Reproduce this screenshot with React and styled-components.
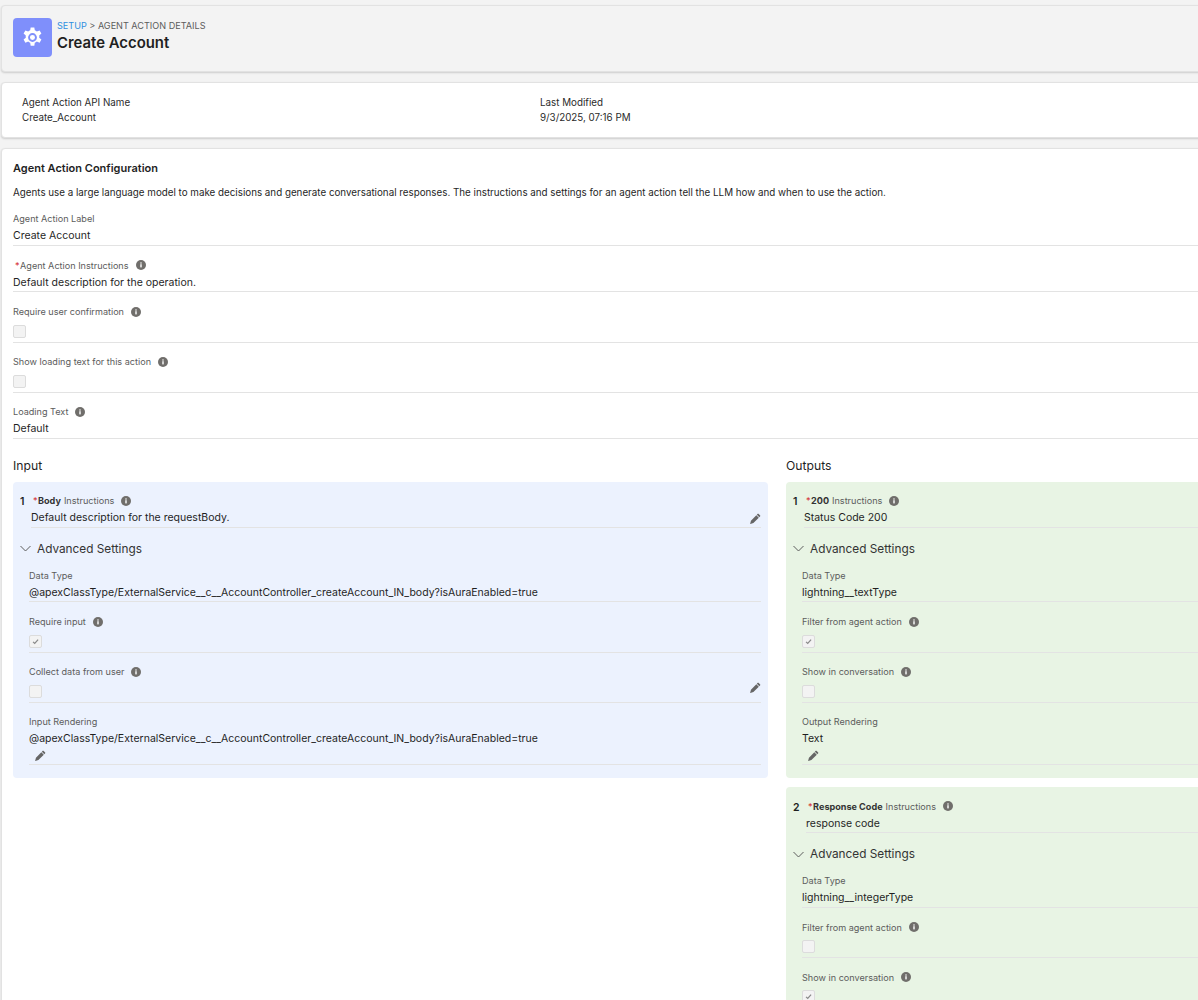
import React from 'react';
import styled, { createGlobalStyle } from 'styled-components';

const GlobalStyle = createGlobalStyle`
  html, body {
    margin: 0;
    height: 1000px;
    overflow: hidden;
    background: #f3f3f3;
  }
  body {
    font-family: "Inter", "Liberation Sans", Arial, sans-serif;
    color: #1f1f1f;
  }
`;

const Gear = () => (
  <svg width="23" height="23" viewBox="0 0 24 24" fill="#fff">
    <path
      fillRule="evenodd"
      d="M13.9 1.5h-3.8l-.5 3a8 8 0 0 0-2.1 1.2L4.6 4.6 2.7 7.9l2.3 1.9a8 8 0 0 0 0 2.4l-2.3 1.9 1.9 3.3 2.9-1.1a8 8 0 0 0 2.1 1.2l.5 3h3.8l.5-3a8 8 0 0 0 2.1-1.2l2.9 1.1 1.9-3.3-2.3-1.9a8 8 0 0 0 0-2.4l2.3-1.9-1.9-3.3-2.9 1.1a8 8 0 0 0-2.1-1.2zM12 7.4a4.6 4.6 0 1 1 0 9.2 4.6 4.6 0 0 1 0-9.2z"
    />
    <circle cx="12" cy="12" r="2.6" />
  </svg>
);

const Pencil = () => (
  <svg width="11" height="11" viewBox="0 0 12 12" fill="#666">
    <path d="M8.4.9a.6.6 0 0 1 .85 0l1.85 1.85a.6.6 0 0 1 0 .85l-.95.95-2.7-2.7zM6.9 2.4l2.7 2.7-5.9 5.9-3.3.9a.2.2 0 0 1-.25-.25l.9-3.3z" />
  </svg>
);

const Check = () => (
  <svg width="7" height="7" viewBox="0 0 10 10" fill="none" stroke="#8a8a8a" strokeWidth="1.8">
    <path d="M1.5 5.5l2.4 2.2L8.7 2.3" />
  </svg>
);

const Chevron = () => (
  <svg width="11" height="7" viewBox="0 0 11 7" fill="none" stroke="#5c5c5c" strokeWidth="1">
    <path d="M.5 1l5 5 5-5" />
  </svg>
);

const Info = () => (
  <InfoDot>
    <svg width="10" height="10" viewBox="0 0 10 10">
      <circle cx="5" cy="5" r="5" fill="#706e6b" />
      <rect x="4.3" y="4.2" width="1.4" height="3.2" fill="#fff" />
      <rect x="4.3" y="2.4" width="1.4" height="1.2" fill="#fff" />
    </svg>
  </InfoDot>
);

const Page = styled.div`
  width: 1240px;
  padding: 5px 0 0 1px;
  box-sizing: border-box;
`;

const Card = styled.section`
  background: ${(p) => p.$bg || '#fff'};
  border: 1px solid #e2e2e2;
  border-radius: 4px;
  box-shadow: 0 1px 2px rgba(0, 0, 0, 0.16);
`;

const Header = styled(Card)`
  height: 67px;
  box-sizing: border-box;
  display: flex;
  align-items: flex-start;
  gap: 5px;
  padding: 12px 11px;
  margin-bottom: 10px;
`;

const IconTile = styled.div`
  width: 39px;
  height: 39px;
  border-radius: 4px;
  background: #7f8ffb;
  display: flex;
  align-items: center;
  justify-content: center;
`;

const Crumbs = styled.div`
  font-size: 9.1px;
  line-height: 12px;
  margin-top: 2px;
  color: #5c5c5c;
`;

const CrumbLink = styled.span`
  color: #2f8fe0;
`;

const Title = styled.h1`
  margin: 2px 0 0;
  font-size: 14.9px;
  line-height: 18px;
  font-weight: 600;
`;

const InfoCard = styled(Card)`
  height: 56px;
  box-sizing: border-box;
  padding: 12px 20px 0;
  display: flex;
  margin-bottom: 10px;
  font-size: 9.8px;
  line-height: 15px;
  color: #2b2b2b;
`;

const InfoCol = styled.div`
  width: 518px;
`;

const ConfigCard = styled(Card)`
  height: 900px;
  padding: 11.5px 0 0 11px;
`;

const SectionTitle = styled.h2`
  margin: 0;
  font-size: 11px;
  line-height: 14px;
  font-weight: 600;
`;

const Intro = styled.p`
  margin: 11.5px 0 12px;
  font-size: 9.8px;
  line-height: 14px;
`;

const Field = styled.div`
  border-bottom: 1px solid #e3e3e3;
  margin-bottom: ${(p) => p.$gap ?? 13}px;
  padding-bottom: ${(p) => p.$pad ?? 1.5}px;
`;

const Label = styled.div`
  display: flex;
  align-items: center;
  font-size: 9.1px;
  line-height: 13px;
  color: #5c5c5c;
`;

const Required = styled.span`
  color: #d3252b;
  margin: 0 0.5px 0 2px;
`;

const Strong = styled.b`
  font-weight: 700;
  color: #333;
  margin-right: 3px;
`;

const InfoDot = styled.span`
  display: inline-flex;
  margin-left: 7px;
`;

const Value = styled.div`
  display: flex;
  justify-content: space-between;
  align-items: center;
  font-size: 10.5px;
  line-height: 14px;
  margin-top: 4px;
  white-space: nowrap;
`;

const Box = styled.div`
  width: 13px;
  height: 13px;
  box-sizing: border-box;
  margin-top: 6.5px;
  border: 1px solid #dcdcdc;
  border-radius: 2px;
  background: #f3f3f3;
  display: flex;
  align-items: center;
  justify-content: center;
`;

const BoxRow = styled.div`
  display: flex;
  justify-content: space-between;
  align-items: center;
`;

const PencilRow = styled.div`
  display: flex;
  padding: 4px 0 0 6px;
  height: 12px;
`;

const SideTools = styled.span`
  display: inline-flex;
`;

const Columns = styled.div`
  display: grid;
  grid-template-columns: 755px 755px;
  column-gap: 18px;
  margin-top: 19px;
`;

const ColumnTitle = styled.h3`
  margin: 0 0 8px;
  font-size: 12.2px;
  line-height: 16px;
  font-weight: 400;
`;

const Action = styled.div`
  background: ${(p) => p.$bg};
  border-radius: 4px;
  padding: 12.5px 7px 13px;
  margin-bottom: 9.5px;
`;

const ActionHead = styled.div`
  display: flex;
  align-items: flex-start;
  gap: 6.5px;
`;

const Num = styled.span`
  font-size: 10.5px;
  line-height: 14px;
  font-weight: 600;
  margin-top: 1px;
`;

const ActionBody = styled.div`
  flex: 1;
`;

const Advanced = styled.div`
  display: flex;
  align-items: center;
  gap: 6px;
  margin: 13px 0 12px;
  font-size: 11.8px;
  line-height: 16px;
  color: #333;
`;

const Settings = styled.div`
  padding-left: 9px;
`;

const CheckField = ({ label, checked, tool }) => (
  <Field $pad={4} $gap={12.5}>
    <Label>
      {label}
      <Info />
    </Label>
    <BoxRow>
      <Box>{checked && <Check />}</Box>
      {tool && (
        <SideTools>
          <Pencil />
        </SideTools>
      )}
    </BoxRow>
  </Field>
);

const ActionCard = ({ bg, n, name, value, tool, type, filterLabel, filterOn, showLabel, showOn, render, renderValue }) => (
  <Action $bg={bg}>
    <ActionHead>
      <Num>{n}</Num>
      <ActionBody>
        <Label>
          <Required>*</Required>
          <Strong>{name}</Strong> Instructions
          <Info />
        </Label>
        <Field $gap={0}>
          <Value>
            {value}
            {tool && (
              <SideTools>
                <Pencil />
              </SideTools>
            )}
          </Value>
        </Field>
      </ActionBody>
    </ActionHead>
    <Advanced>
      <Chevron />
      Advanced Settings
    </Advanced>
    <Settings>
      <Field>
        <Label>Data Type</Label>
        <Value>{type}</Value>
      </Field>
      <CheckField label={filterLabel} checked={filterOn} />
      <CheckField label={showLabel} checked={showOn} tool={tool} />
      {render && (
        <Field $gap={0}>
          <Label>{render}</Label>
          <Value>{renderValue}</Value>
          <PencilRow>
            <Pencil />
          </PencilRow>
        </Field>
      )}
    </Settings>
  </Action>
);

const apexType = '@apexClassType/ExternalService__c__AccountController_createAccount_IN_body?isAuraEnabled=true';

export default function App() {
  return (
    <Page>
      <GlobalStyle />
      <Header $bg="#f3f3f3">
        <IconTile>
          <Gear />
        </IconTile>
        <div>
          <Crumbs>
            <CrumbLink>SETUP</CrumbLink> &gt; AGENT ACTION DETAILS
          </Crumbs>
          <Title>Create Account</Title>
        </div>
      </Header>
      <InfoCard>
        <InfoCol>
          <div>Agent Action API Name</div>
          <div>Create_Account</div>
        </InfoCol>
        <InfoCol>
          <div>Last Modified</div>
          <div>9/3/2025, 07:16 PM</div>
        </InfoCol>
      </InfoCard>
      <ConfigCard>
        <SectionTitle>Agent Action Configuration</SectionTitle>
        <Intro>
          Agents use a large language model to make decisions and generate conversational responses. The instructions and settings for an agent action tell the LLM how and when to use the action.
        </Intro>
        <Field>
          <Label>Agent Action Label</Label>
          <Value>Create Account</Value>
        </Field>
        <Field>
          <Label>
            <Required>*</Required>Agent Action Instructions
            <Info />
          </Label>
          <Value>Default description for the operation.</Value>
        </Field>
        <CheckField label="Require user confirmation" />
        <CheckField label="Show loading text for this action" />
        <Field $gap={0}>
          <Label>
            Loading Text
            <Info />
          </Label>
          <Value>Default</Value>
        </Field>
        <Columns>
          <div>
            <ColumnTitle>Input</ColumnTitle>
            <ActionCard
              bg="#ecf2fe"
              n="1"
              name="Body"
              value="Default description for the requestBody."
              tool
              type={apexType}
              filterLabel="Require input"
              filterOn
              showLabel="Collect data from user"
              render="Input Rendering"
              renderValue={apexType}
            />
          </div>
          <div>
            <ColumnTitle>Outputs</ColumnTitle>
            <ActionCard
              bg="#e8f4e4"
              n="1"
              name="200"
              value="Status Code 200"
              type="lightning__textType"
              filterLabel="Filter from agent action"
              filterOn
              showLabel="Show in conversation"
              render="Output Rendering"
              renderValue="Text"
            />
            <ActionCard
              bg="#e8f4e4"
              n="2"
              name="Response Code"
              value="response code"
              type="lightning__integerType"
              filterLabel="Filter from agent action"
              showLabel="Show in conversation"
              showOn
            />
          </div>
        </Columns>
      </ConfigCard>
    </Page>
  );
}
